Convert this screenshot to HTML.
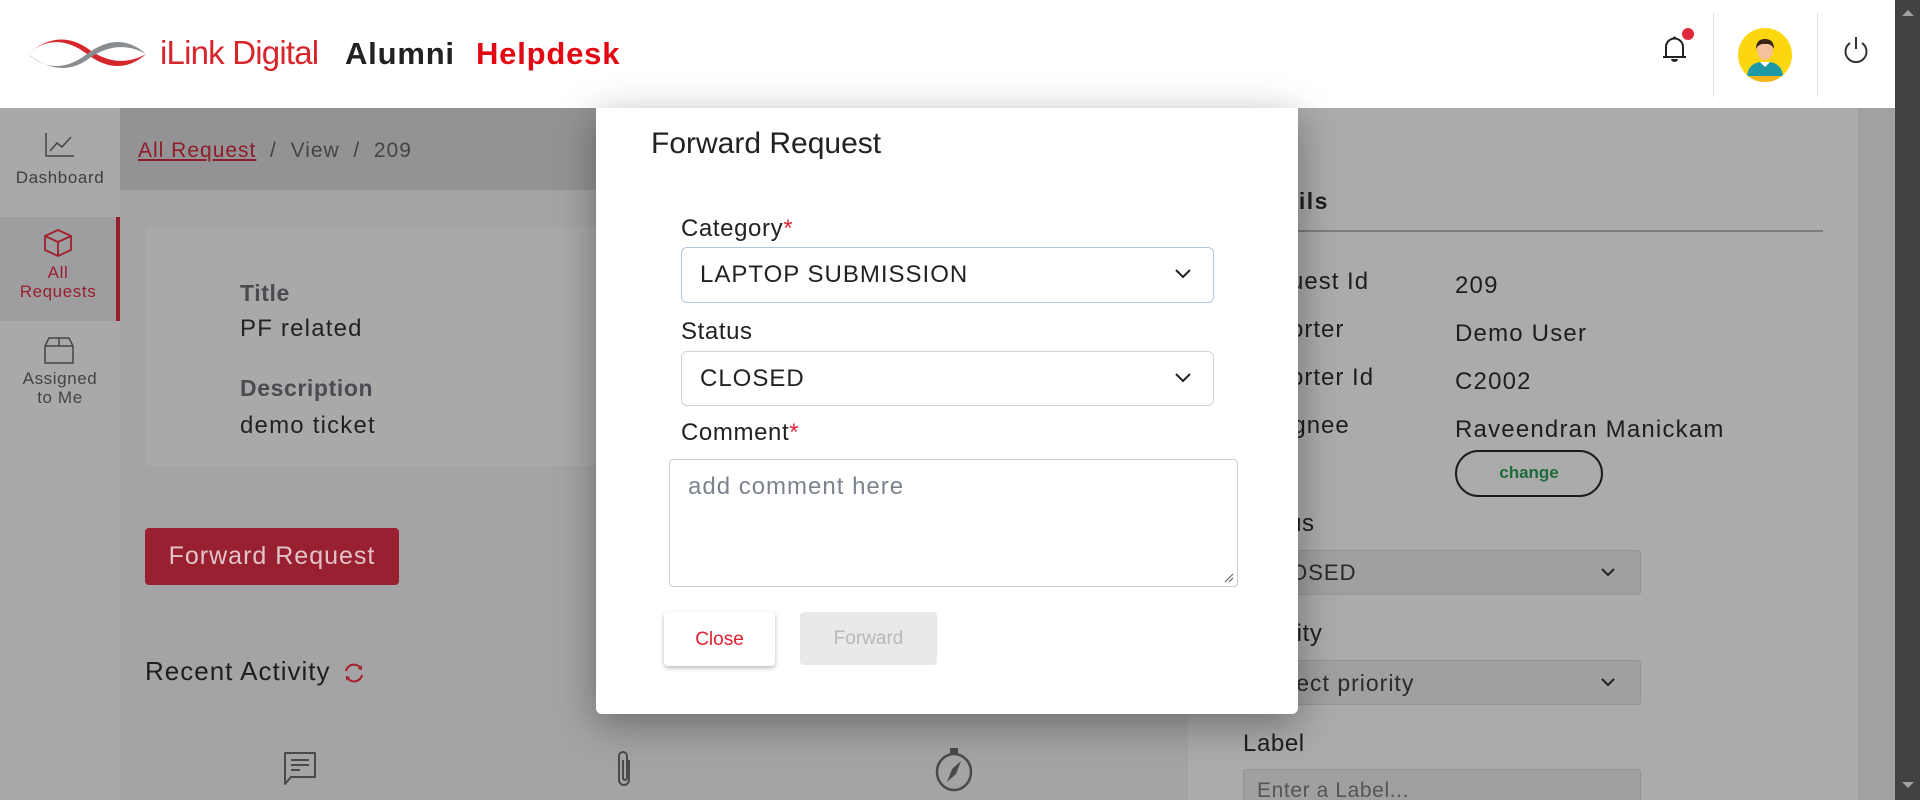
<!DOCTYPE html>
<html><head><meta charset="utf-8"><style>
*{box-sizing:border-box;margin:0;padding:0}
html,body{width:1920px;height:800px;overflow:hidden}
body{position:relative;background:#a4a4a6;font-family:"Liberation Sans",sans-serif;}
.a{position:absolute;white-space:nowrap}
.m{letter-spacing:.6px}
</style></head><body>
<!-- header -->
<div class="a" style="left:0;top:0;width:1895px;height:108px;background:#fff"></div>
<svg class="a" style="left:26px;top:34px" width="122" height="40" viewBox="0 0 122 40">
<path d="M2 20 C20 4 40 4 61 20 C82 36 102 36 120 20 C102 30 82 30 61 14 C40 0 20 4 2 20Z" fill="#d6252b"/>
<path d="M2 20 C20 36 40 36 61 20 C82 4 102 4 120 20 C102 10 82 10 61 26 C40 40 20 34 2 20Z" fill="#8a8d90"/>
</svg>
<div class="a" style="left:160px;top:34px;font-size:33px;color:#d6252b;letter-spacing:-0.8px">iLink Digital</div>
<div class="a" style="left:345px;top:36px;font-size:31px;font-weight:bold;color:#222;letter-spacing:.8px">Alumni</div>
<div class="a" style="left:476px;top:36px;font-size:31px;font-weight:bold;color:#e30613;letter-spacing:.8px">Helpdesk</div>
<svg class="a" style="left:1660px;top:33px" width="30" height="32" viewBox="0 0 30 32"><path d="M6 24 V14 a8.5 8.5 0 0 1 17 0 V24 H26 H3 Z" fill="none" stroke="#222" stroke-width="2"/><path d="M11 26 a3.5 3 0 0 0 7 0z" fill="#222"/><circle cx="14.5" cy="5" r="1.5" fill="#222"/></svg>
<div class="a" style="left:1682px;top:28px;width:12px;height:12px;border-radius:50%;background:#e0283a"></div>
<div class="a" style="left:1713px;top:13px;width:1px;height:84px;background:#ddd"></div>
<div class="a" style="left:1817px;top:13px;width:1px;height:84px;background:#ddd"></div>
<svg class="a" style="left:1738px;top:28px" width="54" height="54" viewBox="0 0 54 54"><defs><clipPath id="c"><circle cx="27" cy="27" r="27"/></clipPath></defs><circle cx="27" cy="27" r="27" fill="#fcd60e"/><g clip-path="url(#c)"><rect x="0" y="47" width="54" height="7" fill="#f2b51c"/><path d="M9 48 Q10 36 22 34 H32 Q44 36 45 48Z" fill="#1e9aa6"/><path d="M22 34 L27 39 L32 34Z" fill="#fff"/><ellipse cx="27" cy="22" rx="8" ry="10" fill="#f5c09a"/><path d="M18 21 Q18 11 27 11 Q36 11 36 21 Q33 15 27 16 Q21 15 18 21Z" fill="#3a2418"/></g></svg>
<svg class="a" style="left:1842px;top:35px" width="28" height="30" viewBox="0 0 28 30"><path d="M8 8 A10.5 10.5 0 1 0 20 8" fill="none" stroke="#333" stroke-width="2"/><line x1="14" y1="2" x2="14" y2="14" stroke="#333" stroke-width="2"/></svg>
<!-- scrollbar -->
<div class="a" style="left:1895px;top:0;width:25px;height:800px;background:#424242"></div>
<div class="a" style="left:1902px;top:10px;border:6px solid transparent;border-bottom:6px solid #a0a0a0;border-top:0"></div>
<div class="a" style="left:1902px;top:782px;border:6px solid transparent;border-top:6px solid #a0a0a0;border-bottom:0"></div>
<!-- sidebar -->
<div class="a" style="left:0;top:108px;width:120px;height:692px;background:#a9a9a9"></div>
<div class="a" style="left:0;top:217px;width:116px;height:104px;background:#9e9ea0"></div>
<div class="a" style="left:116px;top:217px;width:4px;height:104px;background:#9a1f2e"></div>
<svg class="a" style="left:45px;top:133px" width="30" height="24" viewBox="0 0 30 24"><path d="M1 0 V23 H29" fill="none" stroke="#444" stroke-width="1.5"/><path d="M5 18 L12 10 L17 14 L26 4" fill="none" stroke="#444" stroke-width="1.5"/></svg>
<div class="a m" style="left:0;width:120px;text-align:center;top:168px;font-size:17px;color:#3e3e3e">Dashboard</div>
<svg class="a" style="left:43px;top:229px" width="30" height="28" viewBox="0 0 30 28"><path d="M15 1 L28 7 V21 L15 27 L2 21 V7Z M2 7 L15 13 L28 7 M15 13 V27" fill="none" stroke="#a0202e" stroke-width="1.8" stroke-linejoin="round"/></svg>
<div class="a m" style="left:0;width:116px;text-align:center;top:263px;font-size:17px;line-height:19px;color:#9a1f2e">All<br>Requests</div>
<svg class="a" style="left:44px;top:336px" width="30" height="28" viewBox="0 0 30 28"><path d="M1 10 L5 2 H25 L29 10 V27 H1Z M1 10 H29 M15 2 V10" fill="none" stroke="#444" stroke-width="1.5"/></svg>
<div class="a m" style="left:0;width:120px;text-align:center;top:369px;font-size:17px;line-height:19px;color:#444">Assigned<br>to Me</div>
<!-- breadcrumb -->
<div class="a" style="left:120px;top:108px;width:1070px;height:82px;background:#939395"></div>
<div class="a m" style="left:138px;top:139px;font-size:21px;color:#444;letter-spacing:1px"><span style="color:#8e1d29;text-decoration:underline">All Request</span>&nbsp; / &nbsp;View &nbsp;/&nbsp; 209</div>
<!-- card -->
<div class="a" style="left:145px;top:227px;width:1010px;height:239px;background:#a9a9a9;border-radius:6px"></div>
<div class="a m" style="left:240px;top:280px;font-size:23px;font-weight:bold;color:#4a4c52">Title</div>
<div class="a m" style="left:240px;top:315px;font-size:24px;color:#222;letter-spacing:1.2px">PF related</div>
<div class="a m" style="left:240px;top:375px;font-size:23px;font-weight:bold;color:#4a4c52">Description</div>
<div class="a m" style="left:240px;top:412px;font-size:24px;color:#222;letter-spacing:1.2px">demo ticket</div>
<div class="a m" style="left:145px;top:528px;width:254px;height:57px;background:#982030;border-radius:4px;color:#e2c4c8;font-size:25px;text-align:center;line-height:57px;letter-spacing:1px">Forward Request</div>
<div class="a m" style="left:145px;top:656px;font-size:26px;color:#1e1e1e;letter-spacing:1px">Recent Activity</div>
<svg class="a" style="left:342px;top:661px" width="24" height="24" viewBox="0 0 24 24"><path d="M4 10 A8 8 0 0 1 19 8 M20 14 A8 8 0 0 1 5 16" fill="none" stroke="#a51f2c" stroke-width="2"/><path d="M16 8 L20 9 L20 4Z M8 16 L4 15 L4 20Z" fill="#a51f2c"/></svg>
<svg class="a" style="left:282px;top:750px" width="36" height="36" viewBox="0 0 36 36"><path d="M3 3 H33 V27 H9 L3 34Z" fill="none" stroke="#4a4a4a" stroke-width="2" stroke-linejoin="round"/><path d="M9 10 H27 M9 15 H27 M9 20 H18" stroke="#4a4a4a" stroke-width="2"/></svg>
<svg class="a" style="left:614px;top:748px" width="22" height="42" viewBox="0 0 22 42"><path d="M15 12 V32 a5 5 0 0 1 -10 0 V8 a4 4 0 0 1 8 0 V30 a2 2 0 0 1 -4 0 V12" fill="none" stroke="#4a4a4a" stroke-width="2"/></svg>
<svg class="a" style="left:933px;top:746px" width="42" height="46" viewBox="0 0 42 46"><ellipse cx="21" cy="26" rx="17" ry="18" fill="none" stroke="#4a4a4a" stroke-width="2.5"/><rect x="17" y="2" width="8" height="5" fill="#4a4a4a"/><path d="M28 15 L23 28 L14 36 L19 23Z" fill="#4a4a4a"/></svg>
<!-- right panel -->
<div class="a" style="left:1188px;top:108px;width:670px;height:692px;background:#ababab"></div>
<div class="a" style="left:1858px;top:108px;width:37px;height:692px;background:#a1a1a1"></div>
<div class="a m" style="left:1243px;top:188px;font-size:23px;font-weight:bold;color:#1e1e1e;letter-spacing:1.5px">Details</div>
<div class="a" style="left:1243px;top:230px;width:580px;height:2px;background:#7e7e7e"></div>
<div class="a m" style="left:1243px;top:258px;font-size:24px;color:#1e1e1e;line-height:48px;letter-spacing:1px">Request Id<br>Reporter<br>Reporter Id<br>Assignee</div>
<div class="a m" style="left:1455px;top:262px;font-size:24px;color:#1e1e1e;line-height:48px;letter-spacing:1.2px">209<br>Demo User<br>C2002<br>Raveendran Manickam</div>
<div class="a" style="left:1455px;top:450px;width:148px;height:47px;border:2.5px solid #1a1a1a;border-radius:24px;text-align:center;line-height:42px;font-size:17px;font-weight:bold;color:#1e6b3b">change</div>
<div class="a m" style="left:1243px;top:510px;font-size:24px;color:#1e1e1e">Status</div>
<div class="a" style="left:1243px;top:550px;width:398px;height:45px;background:#a0a0a2;border:1px solid #959595;border-radius:3px"></div>
<div class="a m" style="left:1260px;top:560px;font-size:22px;color:#2a2a2a;letter-spacing:1px">CLOSED</div>
<div class="a m" style="left:1243px;top:620px;font-size:24px;color:#1e1e1e">Priority</div>
<div class="a" style="left:1243px;top:660px;width:398px;height:45px;background:#a0a0a2;border:1px solid #959595;border-radius:3px"></div>
<div class="a m" style="left:1260px;top:670px;font-size:23px;color:#2a2a2a;letter-spacing:1px">Select priority</div>
<svg class="a" style="left:1600px;top:566px" width="16" height="12" viewBox="0 0 16 12"><path d="M2 3 L8 9 L14 3" fill="none" stroke="#222" stroke-width="2"/></svg>
<svg class="a" style="left:1600px;top:676px" width="16" height="12" viewBox="0 0 16 12"><path d="M2 3 L8 9 L14 3" fill="none" stroke="#222" stroke-width="2"/></svg>
<div class="a m" style="left:1243px;top:730px;font-size:24px;color:#1e1e1e">Label</div>
<div class="a" style="left:1243px;top:769px;width:398px;height:31px;background:#a0a0a2;border:1px solid #959595;border-bottom:0;border-radius:3px 3px 0 0"></div>
<div class="a m" style="left:1257px;top:779px;font-size:21px;color:#555">Enter a Label...</div>
<!-- modal -->
<div class="a" style="left:596px;top:108px;width:702px;height:606px;background:#fff;border-radius:0 0 6px 6px;box-shadow:0 10px 40px rgba(0,0,0,.35)"></div>
<div class="a" style="left:651px;top:127px;font-size:30px;color:#222">Forward Request</div>
<div class="a m" style="left:681px;top:215px;font-size:24px;color:#222">Category<span style="color:#e0283a">*</span></div>
<div class="a" style="left:681px;top:247px;width:533px;height:56px;border:1px solid #b4c6e6;border-radius:6px"></div>
<div class="a m" style="left:700px;top:261px;font-size:24px;color:#222;letter-spacing:1px">LAPTOP SUBMISSION</div>
<div class="a m" style="left:681px;top:318px;font-size:24px;color:#222">Status</div>
<div class="a" style="left:681px;top:351px;width:533px;height:55px;border:1px solid #ced4da;border-radius:6px"></div>
<div class="a m" style="left:700px;top:365px;font-size:24px;color:#222;letter-spacing:1px">CLOSED</div>
<svg class="a" style="left:1174px;top:268px" width="18" height="12" viewBox="0 0 18 12"><path d="M2 2 L9 9 L16 2" fill="none" stroke="#222" stroke-width="2"/></svg>
<svg class="a" style="left:1174px;top:372px" width="18" height="12" viewBox="0 0 18 12"><path d="M2 2 L9 9 L16 2" fill="none" stroke="#222" stroke-width="2"/></svg>
<div class="a m" style="left:681px;top:419px;font-size:24px;color:#222">Comment<span style="color:#e0283a">*</span></div>
<div class="a" style="left:669px;top:459px;width:569px;height:128px;border:1px solid #c8ccd4;border-radius:4px"></div>
<div class="a m" style="left:688px;top:473px;font-size:24px;color:#7c838e;letter-spacing:1px">add comment here</div>
<svg class="a" style="left:1224px;top:573px" width="10" height="10" viewBox="0 0 10 10"><path d="M1 9 L9 1 M5 9 L9 5" stroke="#555" stroke-width="1"/></svg>
<div class="a" style="left:664px;top:612px;width:111px;height:54px;background:#fff;border-radius:4px;box-shadow:0 2px 5px rgba(0,0,0,.28);text-align:center;line-height:56px;font-size:19px;color:#e0202f">Close</div>
<div class="a" style="left:800px;top:612px;width:137px;height:53px;background:#e9e9e9;border-radius:4px;text-align:center;line-height:53px;font-size:19px;color:#b8b8b8">Forward</div>
</body></html>
